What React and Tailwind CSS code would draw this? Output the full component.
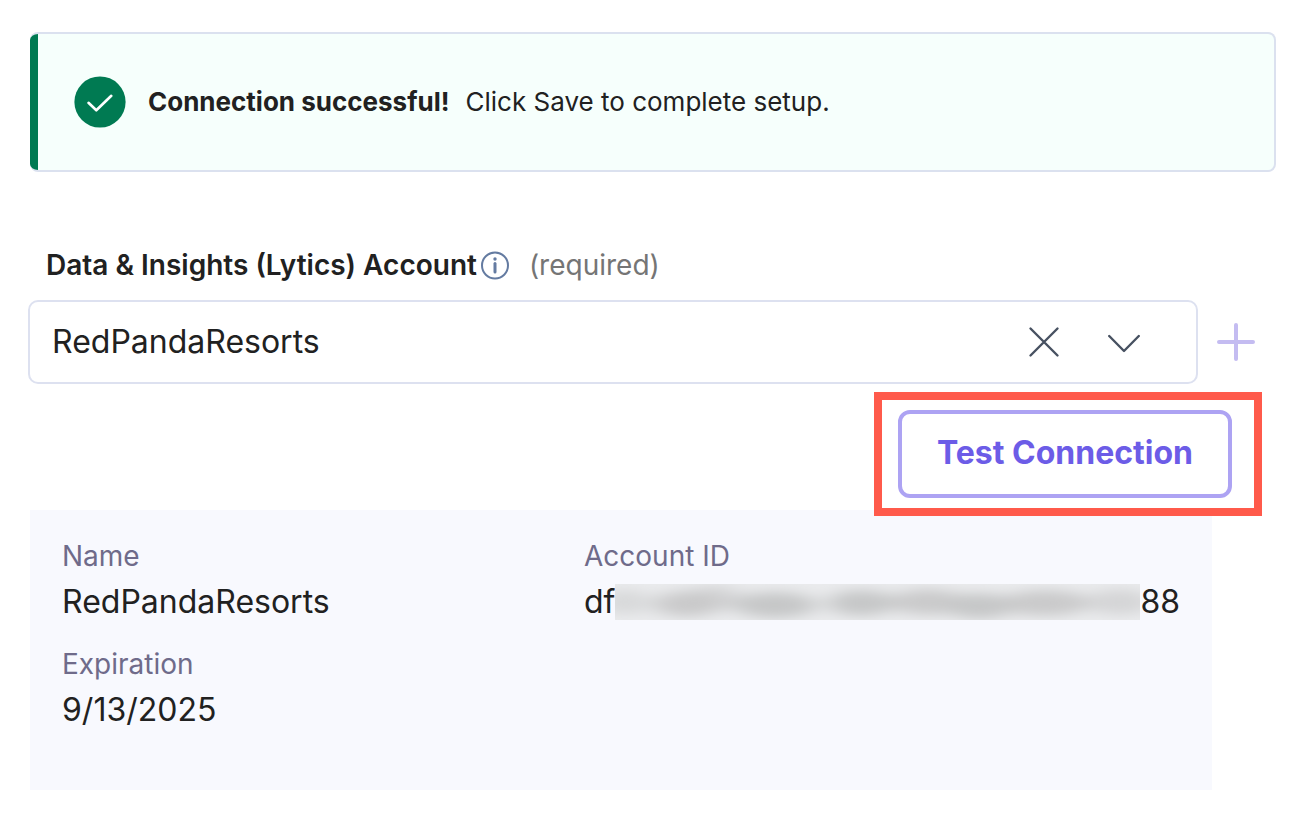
import React, { useRef, useState } from 'react';

const details = [
    { label: "Name", value: "RedPandaResorts" },
    { label: "Account ID", start: "df", end: "88" },
    { label: "Expiration", value: "9/13/2025" },
];

// dark spots of the masked part of the account id
const smudges = [
    { cx: 10, cy: 18, rx: 24, opacity: 0.5 },
    { cx: 72, cy: 20, rx: 34, opacity: 0.9 },
    { cx: 100, cy: 14, rx: 26, opacity: 0.6 },
    { cx: 160, cy: 21, rx: 42, opacity: 1 },
    { cx: 246, cy: 19, rx: 34, opacity: 1 },
    { cx: 312, cy: 18, rx: 36, opacity: 0.9 },
    { cx: 364, cy: 22, rx: 34, opacity: 1 },
    { cx: 430, cy: 19, rx: 44, opacity: 0.9 },
    { cx: 504, cy: 18, rx: 32, opacity: 0.6 },
];

const MaskedValue = () => (
    <svg className="h-9 min-w-0 flex-1 bg-[#eaebed]" viewBox="0 0 524 36" preserveAspectRatio="none" aria-hidden="true">
        <defs>
            <filter id="smudge" x="-20%" y="-100%" width="140%" height="300%">
                <feGaussianBlur stdDeviation="12 6" />
            </filter>
        </defs>
        <g filter="url(#smudge)" fill="#c6c7c8">
            {smudges.map((s) => (
                <ellipse key={s.cx} cx={s.cx} cy={s.cy} rx={s.rx} ry="13" opacity={s.opacity} />
            ))}
        </g>
    </svg>
);

const SuccessAlert = () => (
    <div role="status" className="ml-0.5 flex h-[140px] overflow-hidden rounded-lg border-y-2 border-r-2 border-[#dbe1ef] bg-[#f6fffc]">
        <div className="w-2 shrink-0 bg-[#007a52]" />
        <div className="flex items-center pl-9">
            <svg className="size-[52px] shrink-0" viewBox="0 0 52 52" fill="none">
                <circle cx="26" cy="26" r="25.6" fill="#007a52" />
                <path d="M14.5 26.8 22.3 34.3 37.3 19.8" stroke="#fff" strokeWidth="2.6" strokeLinecap="round" strokeLinejoin="round" />
            </svg>
            <p className="ml-[22px] text-[26px] leading-9">
                <strong className="mr-4 font-bold">Connection successful!</strong>
                Click Save to complete setup.
            </p>
        </div>
    </div>
);

const App = () => {
    const selectRef = useRef(null);
    const [account, setAccount] = useState("RedPandaResorts");

    return (
        <main className="min-h-screen bg-white pt-8 pr-[18px] pb-7 pl-7 font-['Inter',sans-serif] text-[#212121]">
            <SuccessAlert />

            <div className="mt-[75px] flex items-center pl-[18px] text-[28px] leading-9">
                <label htmlFor="account" className="font-semibold">Data &amp; Insights (Lytics) Account</label>
                <svg className="ml-[3px] size-[30px]" viewBox="0 0 30 30" fill="none">
                    <circle cx="15" cy="15.5" r="13" stroke="#647ba1" strokeWidth="2" />
                    <circle cx="15" cy="9" r="1.7" fill="#647ba1" />
                    <path d="M15 13.5V22" stroke="#647ba1" strokeWidth="3" strokeLinecap="round" />
                </svg>
                <span className="ml-[19px] text-[#757575]">(required)</span>
            </div>

            <div className="mt-[17px] flex items-center">
                <div className="flex h-[84px] flex-1 items-center rounded-[10px] border-2 border-[#dde1f0] pr-14 pl-[22px]">
                    <select
                        id="account"
                        ref={selectRef}
                        value={account}
                        onChange={(e) => setAccount(e.target.value)}
                        className="h-full min-w-0 flex-1 appearance-none bg-transparent text-[32px] outline-none">
                        <option value=""></option>
                        <option value="RedPandaResorts">RedPandaResorts</option>
                    </select>
                    <button type="button" aria-label="Clear" onClick={() => setAccount("")}>
                        <svg className="size-8" viewBox="0 0 32 32" fill="none" stroke="#475161" strokeWidth="2.4" strokeLinecap="round">
                            <path d="M2.5 2.5 29.5 29.5M29.5 2.5 2.5 29.5" />
                        </svg>
                    </button>
                    <button type="button" aria-label="Open" className="ml-12" onClick={() => selectRef.current.showPicker()}>
                        <svg className="size-8" viewBox="0 0 32 32" fill="none" stroke="#475161" strokeWidth="2.4" strokeLinecap="round" strokeLinejoin="round">
                            <path d="M1.2 10 16 25 30.8 10" />
                        </svg>
                    </button>
                </div>
                <button type="button" aria-label="Add account" className="mr-[21px] ml-[19px]">
                    <svg className="size-[38px]" viewBox="0 0 38 38" fill="none" stroke="#c4bcf1" strokeWidth="4" strokeLinecap="round">
                        <path d="M2 19H36M19 2V36" />
                    </svg>
                </button>
            </div>

            <div className="relative z-10 mt-2 mr-3.5 -mb-1.5 ml-auto w-fit border-8 border-[#ff5a4b] bg-white py-2.5 pr-[22px] pl-4">
                <button type="button" className="h-[88px] rounded-xl border-4 border-[#ada3f3] px-[35px] pb-0.5 text-[32px] font-bold text-[#6c5ce7]">
                    Test Connection
                </button>
            </div>

            <dl className="mr-16 ml-0.5 grid h-[280px] grid-cols-[522fr_596fr] content-start gap-y-5 bg-[#f8f9fe] px-8 pt-7">
                {details.map((d) => (
                    <div key={d.label}>
                        <dt className="text-[28px] leading-9 text-[#6f6b8a]">{d.label}</dt>
                        <dd className="mt-1 flex items-center text-[32px] leading-12">
                            {d.value}
                            {d.start}
                            {d.start && <MaskedValue />}
                            {d.end}
                        </dd>
                    </div>
                ))}
            </dl>
        </main>
    );
};
export default App;
